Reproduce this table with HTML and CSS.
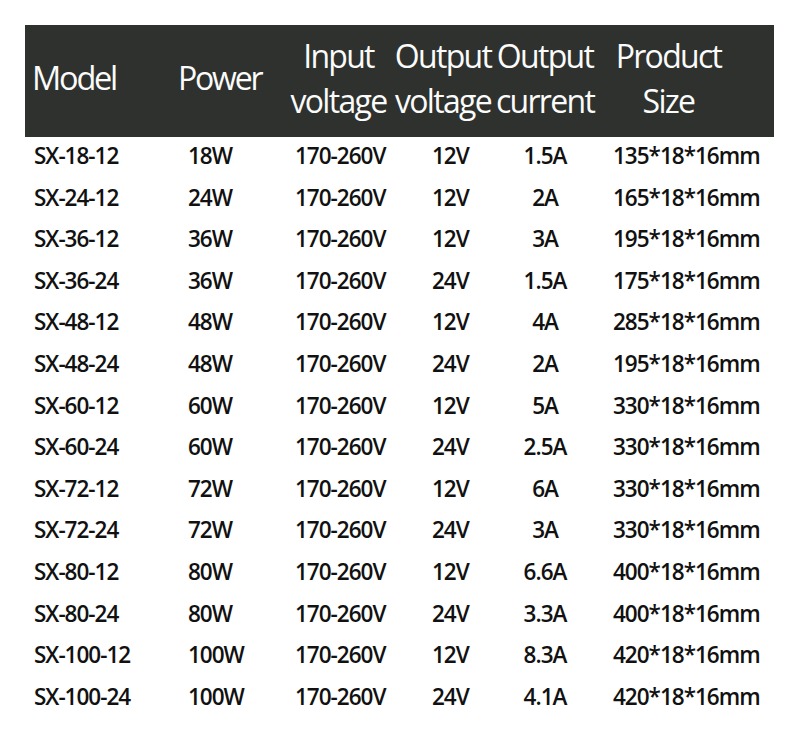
FILE: index.html
```html
<!DOCTYPE html>
<html>
<head>
<meta charset="utf-8">
<link rel="stylesheet" href="styles.css">
</head>
<body>
<div class="sheet">
  <div class="head">
    <div class="hc c1 single big">Model</div>
    <div class="hc c2 single">Power</div>
    <div class="hc c3"><span>Input</span><span>voltage</span></div>
    <div class="hc c4"><span>Output</span><span>voltage</span></div>
    <div class="hc c5"><span>Output</span><span>current</span></div>
    <div class="hc c6"><span>Product</span><span>Size</span></div>
  </div>
  <div class="rows">
    <div class="row"><span class="c1">SX-18-12</span><span class="c2">18W</span><span class="c3">170-260V</span><span class="c4">12V</span><span class="c5">1.5A</span><span class="c6">135*18*16mm</span></div>
    <div class="row"><span class="c1">SX-24-12</span><span class="c2">24W</span><span class="c3">170-260V</span><span class="c4">12V</span><span class="c5">2A</span><span class="c6">165*18*16mm</span></div>
    <div class="row"><span class="c1">SX-36-12</span><span class="c2">36W</span><span class="c3">170-260V</span><span class="c4">12V</span><span class="c5">3A</span><span class="c6">195*18*16mm</span></div>
    <div class="row"><span class="c1">SX-36-24</span><span class="c2">36W</span><span class="c3">170-260V</span><span class="c4">24V</span><span class="c5">1.5A</span><span class="c6">175*18*16mm</span></div>
    <div class="row"><span class="c1">SX-48-12</span><span class="c2">48W</span><span class="c3">170-260V</span><span class="c4">12V</span><span class="c5">4A</span><span class="c6">285*18*16mm</span></div>
    <div class="row"><span class="c1">SX-48-24</span><span class="c2">48W</span><span class="c3">170-260V</span><span class="c4">24V</span><span class="c5">2A</span><span class="c6">195*18*16mm</span></div>
    <div class="row"><span class="c1">SX-60-12</span><span class="c2">60W</span><span class="c3">170-260V</span><span class="c4">12V</span><span class="c5">5A</span><span class="c6">330*18*16mm</span></div>
    <div class="row"><span class="c1">SX-60-24</span><span class="c2">60W</span><span class="c3">170-260V</span><span class="c4">24V</span><span class="c5">2.5A</span><span class="c6">330*18*16mm</span></div>
    <div class="row"><span class="c1">SX-72-12</span><span class="c2">72W</span><span class="c3">170-260V</span><span class="c4">12V</span><span class="c5">6A</span><span class="c6">330*18*16mm</span></div>
    <div class="row"><span class="c1">SX-72-24</span><span class="c2">72W</span><span class="c3">170-260V</span><span class="c4">24V</span><span class="c5">3A</span><span class="c6">330*18*16mm</span></div>
    <div class="row"><span class="c1">SX-80-12</span><span class="c2">80W</span><span class="c3">170-260V</span><span class="c4">12V</span><span class="c5">6.6A</span><span class="c6">400*18*16mm</span></div>
    <div class="row"><span class="c1">SX-80-24</span><span class="c2">80W</span><span class="c3">170-260V</span><span class="c4">24V</span><span class="c5">3.3A</span><span class="c6">400*18*16mm</span></div>
    <div class="row"><span class="c1">SX-100-12</span><span class="c2">100W</span><span class="c3">170-260V</span><span class="c4">12V</span><span class="c5">8.3A</span><span class="c6">420*18*16mm</span></div>
    <div class="row"><span class="c1">SX-100-24</span><span class="c2">100W</span><span class="c3">170-260V</span><span class="c4">24V</span><span class="c5">4.1A</span><span class="c6">420*18*16mm</span></div>
  </div>
</div>
</body>
</html>
```
FILE: styles.css
```css
html, body {
  margin: 0;
  padding: 0;
  background: #ffffff;
}
.sheet {
  width: 749px;
  margin: 25px 0 0 25px;
}
.head,
.row {
  display: grid;
  grid-template-columns: 145px 115px 107px 102px 102px 178px;
}
.head {
  background: #2e312d;
  height: 112px;
  box-sizing: border-box;
  padding: 8px 0 14px;
  color: #fbfbfb;
  font-family: "Open Sans", "Noto Sans", sans-serif;
  font-weight: 500;
  font-size: 32px;
  line-height: 45px;
  letter-spacing: -1.7px;
  white-space: nowrap;
}
.hc {
  display: flex;
  flex-direction: column;
  align-items: center;
}
.hc.single {
  justify-content: center;
  align-items: flex-start;
  padding-bottom: 2px;
  letter-spacing: -2.2px;
}
.hc.big {
  font-size: 32.5px;
}
.head .c1 { padding-left: 7px; }
.head .c2 { padding-left: 8px; }
.head .c6 { padding-right: 33px; }
.rows {
  margin-top: -2px;
  font-family: "Open Sans", "Noto Sans", sans-serif;
  font-weight: 600;
  font-size: 22.5px;
  line-height: 41.6px;
  color: #111111;
  letter-spacing: -1px;
  white-space: nowrap;
}
.row .c1 { padding-left: 9px; }
.row .c2 { padding-left: 18px; }
.row .c3 { padding-left: 10px; }
.row .c4 { padding-left: 40px; }
.row .c5 { text-align: center; }
.row .c6 { padding-left: 17px; }
```
